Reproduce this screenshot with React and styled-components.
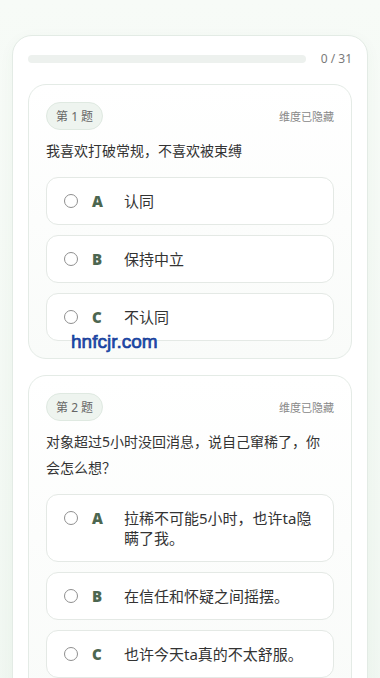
import React from "react";
import styled, { createGlobalStyle } from "styled-components";

const Global = createGlobalStyle`
  html, body { margin: 0; padding: 0; }
  body {
    background: linear-gradient(180deg, #f7fbf7 0%, #f0f7f1 100%);
    font-family: "Noto Sans", "Noto Sans CJK SC", sans-serif;
    color: #333;
  }
`;

const Page = styled.div`
  position: relative;
  padding: 35px 12px 24px;
`;

const Shell = styled.div`
  background: #fff;
  border: 1px solid #e3ebe5;
  border-radius: 20px;
  padding: 15px 15px 16px;
  box-shadow: 0 4px 16px rgba(40, 90, 50, 0.04);
`;

const ProgressRow = styled.div`
  display: flex;
  align-items: center;
  gap: 15px;
  height: 15px;
  margin-bottom: 18px;
`;

const Track = styled.div`
  flex: 1;
  height: 8px;
  border-radius: 999px;
  background: #edf1ee;
  overflow: hidden;
`;

const Fill = styled.div`
  height: 100%;
  background: #7aa482;
`;

const Count = styled.span`
  font-size: 12px;
  line-height: 15px;
  color: #7a7a7a;
  white-space: nowrap;
`;

const List = styled.div`
  display: flex;
  flex-direction: column;
  gap: 16px;
`;

const Card = styled.section`
  border: 1px solid #e4ebe6;
  border-radius: 18px;
  background: linear-gradient(180deg, #ffffff 0%, #f9fbf9 100%);
  padding: 17px;
`;

const CardHead = styled.div`
  display: flex;
  align-items: center;
  justify-content: space-between;
  margin-bottom: 8px;
`;

const Badge = styled.span`
  display: inline-flex;
  align-items: center;
  height: 26px;
  padding: 0 9px;
  border-radius: 999px;
  background: #eef4ef;
  border: 1px solid #dfe9e1;
  font-size: 12px;
  color: #666;
`;

const Hidden = styled.span`
  font-size: 11px;
  color: #888;
`;

const Question = styled.p`
  margin: 0 0 13px;
  padding-right: 8px;
  font-size: 14px;
  line-height: 26px;
  color: #333;
`;

const Options = styled.div`
  display: flex;
  flex-direction: column;
  gap: 10px;
`;

const Option = styled.label`
  display: flex;
  align-items: flex-start;
  background: #fff;
  border: 1px solid #e4e9e5;
  border-radius: 12px;
  padding: 13px 17px;
  cursor: pointer;
`;

const Radio = styled.span`
  flex: none;
  box-sizing: border-box;
  width: 14px;
  height: 14px;
  margin-top: 3px;
  border-radius: 50%;
  border: 1.5px solid #8f8f8f;
  background: #fff;
`;

const Letter = styled.span`
  flex: none;
  width: 20px;
  margin-left: 14px;
  margin-right: 12px;
  font-family: "Open Sans", "Noto Sans", sans-serif;
  font-weight: 800;
  font-size: 15px;
  line-height: 20px;
  color: #4c6650;
`;

const OptionText = styled.span`
  flex: 1;
  font-size: 15px;
  line-height: 20px;
  color: #333;
`;

const Watermark = styled.div`
  position: absolute;
  left: 71px;
  top: 331px;
  font-family: "Liberation Sans", Arial, sans-serif;
  font-size: 19px;
  color: #1d4fb4;
  -webkit-text-stroke: 0.6px #0d3390;
  pointer-events: none;
`;

const questions = [
  {
    n: 1,
    text: "我喜欢打破常规，不喜欢被束缚",
    options: ["认同", "保持中立", "不认同"],
  },
  {
    n: 2,
    text: "对象超过5小时没回消息，说自己窜稀了，你会怎么想？",
    options: [
      "拉稀不可能5小时，也许ta隐瞒了我。",
      "在信任和怀疑之间摇摆。",
      "也许今天ta真的不太舒服。",
    ],
  },
];

const letters = ["A", "B", "C", "D"];

export default function App() {
  const answered = 0;
  const total = 31;
  return (
    <>
      <Global />
      <Page>
        <Shell>
          <ProgressRow>
            <Track>
              <Fill style={{ width: `${(answered / total) * 100}%` }} />
            </Track>
            <Count>
              {answered} / {total}
            </Count>
          </ProgressRow>
          <List>
            {questions.map((q) => (
              <Card key={q.n}>
                <CardHead>
                  <Badge>第 {q.n} 题</Badge>
                  <Hidden>维度已隐藏</Hidden>
                </CardHead>
                <Question>{q.text}</Question>
                <Options>
                  {q.options.map((o, i) => (
                    <Option key={i}>
                      <Radio />
                      <Letter>{letters[i]}</Letter>
                      <OptionText>{o}</OptionText>
                    </Option>
                  ))}
                </Options>
              </Card>
            ))}
          </List>
        </Shell>
        <Watermark>hnfcjr.com</Watermark>
      </Page>
    </>
  );
}
